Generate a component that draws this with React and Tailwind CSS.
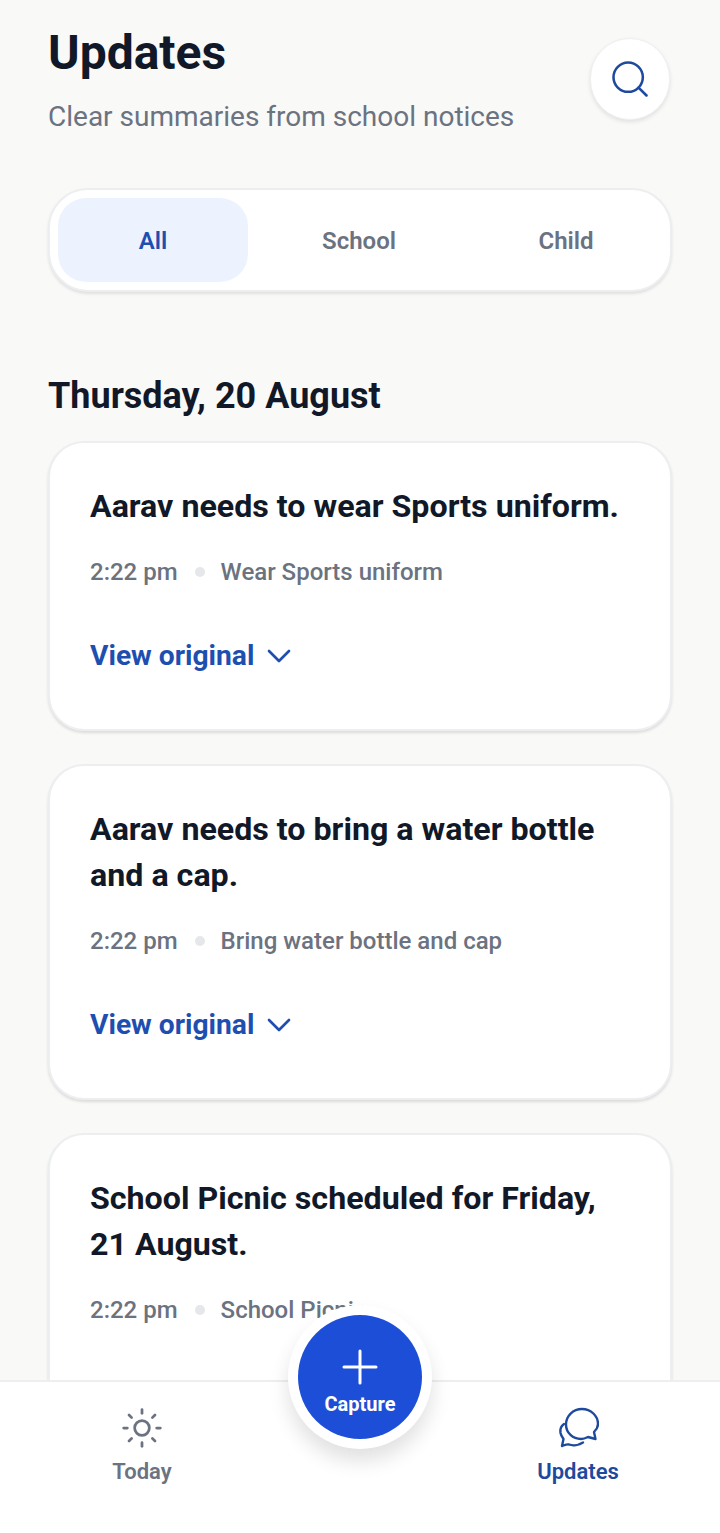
import { Search, ChevronDown, Sun } from "lucide-react";

const updates = [
    { title: "Aarav needs to wear Sports uniform.", time: "2:22 pm", note: "Wear Sports uniform" },
    { title: "Aarav needs to bring a water bottle and a cap.", time: "2:22 pm", note: "Bring water bottle and cap" },
    { title: "School Picnic scheduled for Friday, 21 August.", time: "2:22 pm", note: "School Picnic" },
];

const UpdateCard = ({ title, time, note }) => {
    return (
        <div className="shrink-0 bg-white rounded-[36px] border-2 border-[#eceef0] shadow-[0_2px_3px_rgba(0,0,0,0.12)] px-[40px] pt-[40px] pb-[53px]">
            <h3 className="text-[32.2px] leading-[46px] font-bold text-[#111827]">{title}</h3>
            <div className="flex items-center mt-[25px] text-[24px] leading-[36px] font-medium text-[#6b7280]">
                <span>{time}</span>
                <span className="w-[10px] h-[10px] rounded-full bg-[#e5e7eb] ml-[17px] mr-[16px]"></span>
                <span>{note}</span>
            </div>
            <div className="flex items-center gap-[5px] mt-[46px] h-[40px] text-[28.2px] leading-[40px] font-bold text-[#1e4fb0]">
                <span>View original</span>
                <ChevronDown size={40} strokeWidth={1.6} />
            </div>
        </div>
    );
};

const App = () => {
    return (
        <div className="relative w-[720px] h-[1533px] overflow-hidden flex flex-col bg-[#f9f9f8] font-['Roboto',sans-serif]">
            <div className="flex-1 min-h-0 overflow-hidden px-[48px] pt-[25px]">
                <div className="flex justify-between items-start">
                    <div>
                        <h1 className="text-[48px] leading-[56px] font-bold text-[#111827]">Updates</h1>
                        <p className="mt-[16px] text-[28px] leading-[40px] text-[#6b7280]">Clear summaries from school notices</p>
                    </div>
                    <button className="mt-[13px] mr-[2px] w-[80px] h-[82px] rounded-full bg-white border border-[#eef0f1] shadow-[0_2px_4px_rgba(0,0,0,0.1)] flex items-center justify-center text-[#1e4a9e]">
                        <Search size={44} strokeWidth={1.4} />
                    </button>
                </div>

                <div className="flex items-center h-[104px] mt-[51px] p-[8px] bg-white rounded-[40px] border-2 border-[#eceef0] shadow-[0_2px_3px_rgba(0,0,0,0.1)] text-[24px] font-semibold text-[#6b7280]">
                    <div className="w-[190px] h-[84px] pt-[2px] rounded-[28px] bg-[#edf3fe] text-[#1e4fb0] flex items-center justify-center">All</div>
                    <div className="w-[222px] pt-[2px] text-center">School</div>
                    <div className="flex-1 pt-[2px] text-center">Child</div>
                </div>

                <h2 className="mt-[82px] text-[36px] leading-[44px] font-bold text-[#111827]">Thursday, 20 August</h2>

                <div className="flex flex-col gap-[33px] mt-[23px]">
                    {updates.map((item) => (
                        <UpdateCard key={item.title} {...item} />
                    ))}
                </div>
            </div>

            <nav className="shrink-0 h-[153px] bg-white border-t-2 border-[#eceef0] flex justify-between px-[112px] pt-[24px]">
                <div className="flex flex-col items-center text-[#6b7280] w-[60px]">
                    <Sun size={44} strokeWidth={1.5} />
                    <span className="mt-[7px] text-[22px] leading-[30px] font-semibold">Today</span>
                </div>
                <div className="flex flex-col items-center text-[#1e4a9e] w-[60px]">
                    <svg width="42" height="44" viewBox="0 0 42 44" fill="none" stroke="currentColor" strokeWidth="2.4" strokeLinejoin="round" strokeLinecap="round">
                        <path d="M25 3C16 3 9 10 9 18.500C9 27 16 33 24 33C27 33 29 32 31 31L38.500 33L37 26C39.500 23.500 41 21 41 18C41 10 34 3 25 3Z" />
                        <path d="M7 18C4 20 3 24 3.500 27C4 29.500 5 31 6.500 33L5 40C8 39 10 38 12 38.500C16 40 22 39 26 36.500" />
                    </svg>
                    <span className="mt-[7px] text-[22px] leading-[30px] font-semibold whitespace-nowrap">Updates</span>
                </div>
            </nav>

            {/* Capture button sits over the card and nav */}
            <div className="absolute left-[288px] top-[1305px] w-[144px] h-[144px] rounded-full bg-white shadow-[0_12px_20px_rgba(0,0,0,0.12)] flex items-center justify-center">
                <div className="w-[124px] h-[124px] rounded-full bg-[#1d4ed8] text-white flex flex-col items-center pt-[34px]">
                    <svg width="36" height="36" viewBox="0 0 36 36" fill="none" stroke="currentColor" strokeWidth="3" strokeLinecap="round">
                        <path d="M18 2V34M2 18H34" />
                    </svg>
                    <span className="mt-[6px] text-[20px] leading-[26px] font-bold">Capture</span>
                </div>
            </div>
        </div>
    );
};

export default App;
